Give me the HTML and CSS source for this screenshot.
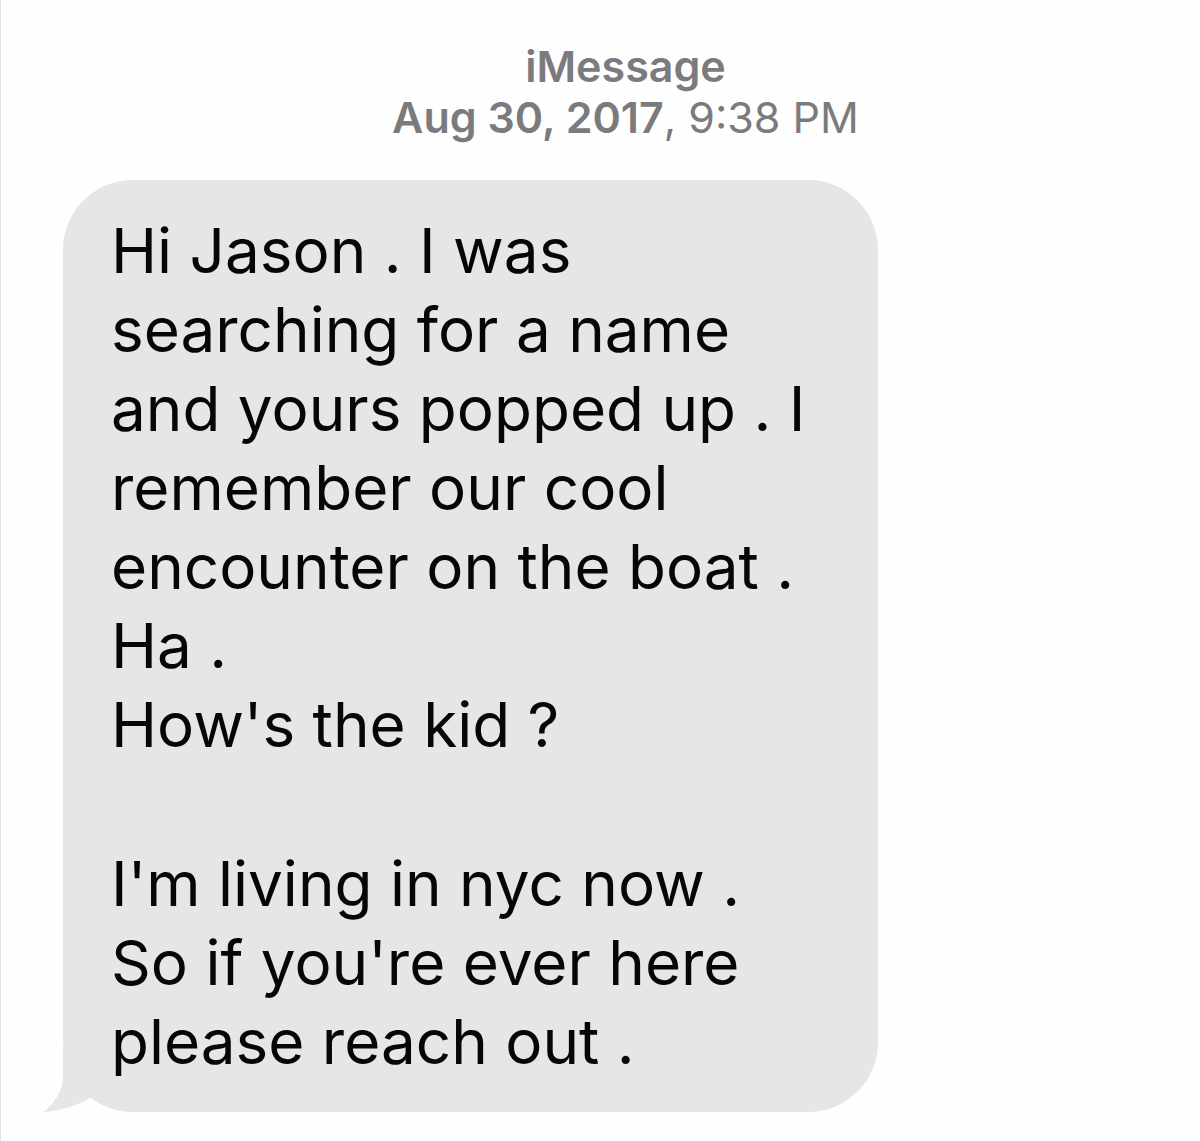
FILE: index.html
```html
<!DOCTYPE html>
<html lang="en">
<head>
  <meta charset="UTF-8">
  <meta name="viewport" content="width=device-width, initial-scale=1.0">
  <title>iMessage</title>
  <link rel="stylesheet" href="styles.css">
</head>

<body>
  <main class="chat">
    <header class="chat-header">
      <div class="service">iMessage</div>
      <time class="timestamp" datetime="2017-08-30T21:38"><b>Aug 30, 2017</b>, 9:38 PM</time>
    </header>

    <!-- Received message -->
    <div class="bubble">
      <p>Hi Jason . I was<br>
        searching for a name<br>
        and yours popped up . I<br>
        remember our cool<br>
        encounter on the boat .<br>
        Ha .<br>
        How's the kid ?</p>
      <p>I'm living in nyc now .<br>
        So if you're ever here<br>
        please reach out .</p>
      <svg class="tail" width="60" height="64" viewBox="0 0 60 64" aria-hidden="true">
        <path d="M20 0 L20 28 C20 42 13 54 0 64 C17 63 33 58 47 50 L60 40 L60 0 Z"/>
      </svg>
    </div>
  </main>
</body>

</html>
```

FILE: styles.css
```css
/* Global Styles */
* {
  box-sizing: border-box;
}

body {
  margin: 0;
  min-height: 100vh;
  font-family: Inter, "Liberation Sans", sans-serif;
  background-color: #fefefe;
  border-left: 1px solid #e2e2e4;
}

.chat {
  padding: 41px 48px 28px 62px;
}

/* Service name and date */
.chat-header {
  text-align: center;
  margin-left: 36px;
  font-size: 43px;
  line-height: 51px;
  color: #7b7b7e;
}

.service {
  font-weight: 600;
}

.timestamp b {
  font-weight: 600;
}

/* Message bubble */
.bubble {
  position: relative;
  width: fit-content;
  min-width: 815px;
  margin-top: 37px;
  padding: 31px 64px 31px 48px;
  border-radius: 70px;
  background-color: #e6e6e9;
  color: #060607;
  font-size: 62px;
  line-height: 79px;
}

.bubble p {
  margin: 0;
}

/* blank line between paragraphs */
.bubble p + p {
  margin-top: 80px;
}

.tail {
  position: absolute;
  left: -20px;
  bottom: 0;
  fill: #e6e6e9;
}
```
